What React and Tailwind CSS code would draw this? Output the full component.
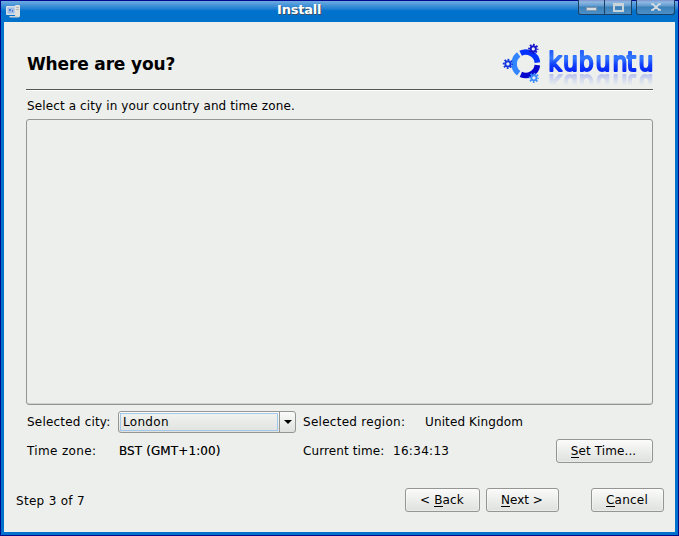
import React from "react";

function Btn({ hot, before = "", after, className }) {
  return (
    <button
      className={`h-6 rounded-[3px] border border-[#949694] bg-linear-to-b from-[#fafbfa] to-[#dfe1de] text-center leading-[22px] whitespace-pre shadow-[inset_0_0_0_1px_rgba(255,255,255,0.35)] ${className}`}
    >
      {before}
      <span className="inline-block h-[13px] border-b border-black leading-[13px]">{hot}</span>
      {after}
    </button>
  );
}

function WinBtn({ children, className }) {
  return (
    <div
      className={`flex h-[15px] items-center justify-center border-r border-b border-l border-[#1c3f66] bg-[linear-gradient(180deg,#7d90cc_0px,#8fb9e2_2px,#5f9bd0_6px,#3c80b8_7px,#4a90c8_14px)] ${className}`}
    >
      {children}
    </div>
  );
}

function Gear({ x, y, color }) {
  return (
    <g transform={`translate(${x} ${y})`} stroke={color} fill="none">
      <circle r="2.6" strokeWidth="1.9" />
      <circle r="4.2" strokeWidth="1.9" strokeDasharray="1.7 1.6" strokeDashoffset="0.8" />
    </g>
  );
}

function Logo() {
  return (
    <div className="flex h-[44px] items-start">
      <svg width="45" height="44" viewBox="500 42 45 44" className="block">
        <g fill="none" strokeWidth="5.6">
          <path d="M520.6 53.3 A11.7 11.7 0 0 1 537.4 62.6" stroke="#0433ff" />
          <path d="M537.4 65.2 A11.7 11.7 0 0 1 520.9 74.4" stroke="#0505cc" />
          <path d="M518.7 73.2 A11.7 11.7 0 0 1 518.7 54.6" stroke="#3385ff" />
        </g>
        <Gear x={533.3} y={48.9} color="#1515cc" />
        <Gear x={507.9} y={63.9} color="#1438e0" />
        <Gear x={533.9} y={77.8} color="#3e8cff" />
      </svg>
      <svg
        width="109"
        height="31"
        viewBox="0 0 109 31"
        className="block [-webkit-box-reflect:below_0px_linear-gradient(180deg,transparent_60%,rgba(0,0,0,0.25)_100%)]"
      >
        <defs>
          <linearGradient id="word" x1="0" y1="7" x2="0" y2="30" gradientUnits="userSpaceOnUse">
            <stop offset="0" stopColor="#1f55ff" />
            <stop offset="0.4" stopColor="#3478ff" />
            <stop offset="0.7" stopColor="#0f3cfc" />
            <stop offset="1" stopColor="#0524f5" />
          </linearGradient>
        </defs>
        <text
          transform="scale(0.88 1)"
          x="3.6 20.4 38.4 57.4 76.6 92.8 106.3"
          y="28.6"
          fontFamily="DejaVu Sans, sans-serif"
          fontSize="26.8"
          fill="url(#word)"
          stroke="url(#word)"
          strokeWidth="2.1"
          strokeLinejoin="round"
        >
          kubuntu
        </text>
      </svg>
    </div>
  );
}

function AppIcon() {
  return (
    <svg width="15" height="14" viewBox="0 0 15 14" className="block">
      <rect x="9" y="0" width="5" height="12" rx="1" fill="#dfe0dc" />
      <path d="M10 2.5h3M10 4.5h3" stroke="#b4b8b8" />
      <rect x="0" y="1" width="10" height="9" rx="1" fill="#d9dee3" />
      <rect x="1.5" y="2.5" width="7" height="6" fill="#9dbce8" />
      <path d="M3 4h2v2H3zM6 5h1v2H6z" fill="#4f7fd0" />
      <path d="M3 11h9l1 1.5H4z" fill="#cfd2d0" />
    </svg>
  );
}

export default function App() {
  return (
    <div className="flex h-[536px] w-[679px] flex-col border border-[#000a8c] bg-[#0072cc] px-[3px] pb-[3px] font-['DejaVu_Sans',sans-serif] text-[12px] text-black">
      <header className="-mx-[3px] flex h-[21px] shrink-0 items-start bg-[linear-gradient(180deg,#6fabe3_0px,#4795d8_4px,#1d7fd0_8px,#0072cc_10px)]">
        <div className="w-[90px] pt-[4px] pl-[5px]">
          <AppIcon />
        </div>
        <div className="flex-1 pl-[186px] text-[13px] leading-[18px] font-bold tracking-[-0.2px] text-white [text-shadow:1px_1px_0_#3d4f60]">
          Install
        </div>
        <div className="-mt-px flex pr-[3px]">
          <WinBtn className="w-[27px] rounded-bl-[3px]">
            <i className="mt-[4px] h-[4px] w-[11px] border border-[#7f98ad] bg-[#d5dde2]" />
          </WinBtn>
          <WinBtn className="w-[27px] border-l-0">
            <i className="h-[9px] w-[11px] border-2 border-t-[3px] border-[#c8d3da]" />
          </WinBtn>
          <WinBtn className="ml-[4px] w-[39px] rounded-b-[3px]">
            <svg width="10" height="8" viewBox="0 0 10 8">
              <path d="M1.5 1l3.5 3 3.5-3M1.5 7l3.5-3 3.5 3M0 1h3M7 1h3M0 7h3M7 7h3" stroke="#d5dde2" strokeWidth="1.7" fill="none" />
            </svg>
          </WinBtn>
        </div>
      </header>

      <main className="flex flex-1 flex-col bg-[#edefec]">
        <div className="ml-[22px] flex h-[68px] w-[627px] justify-between border-b border-[#555755] shadow-[0_1px_0_#fff]">
          <h1 className="pt-[31px] pl-px text-[17px] leading-[22px] font-bold tracking-[-0.15px]">Where are you?</h1>
          <div className="-mr-px pt-[20px]">
            <Logo />
          </div>
        </div>
        <p className="mt-[8px] ml-[23px] h-[21px] leading-[16px] tracking-[0.12px]">Select a city in your country and time zone.</p>
        <div className="ml-[22px] h-[286px] w-[627px] rounded-[3px] border border-[#949694] shadow-[inset_0_-1px_0_#cfd1ce]" />

        <div className="mt-[6px] ml-[23px] flex h-[22px] w-[626px] items-center">
          <span className="w-[91px] tracking-[0.2px]">Selected city:</span>
          <div className="flex h-[22px] w-[178px] rounded-[3px] border border-[#949694] bg-linear-to-b from-[#fafbfa] to-[#dfe1de]">
            <div className="flex-1 p-px">
              <div className="h-[18px] border border-[#a3c8ea] bg-linear-to-b from-[#f0f2ef] to-[#e2e4e1] pl-[2px] leading-[17px] tracking-[0.3px]">
                London
              </div>
            </div>
            <div className="flex w-[16px] items-center justify-center border-l border-[#949694]">
              <svg width="8" height="4" viewBox="0 0 8 4">
                <path d="M0 0h8L4 4z" />
              </svg>
            </div>
          </div>
          <span className="ml-[7px] w-[122px] tracking-[0.28px]">Selected region:</span>
          <span className="tracking-[0.12px]">United Kingdom</span>
        </div>

        <div className="mt-[6px] ml-[23px] flex h-[24px] w-[626px] items-center">
          <span className="w-[92px] tracking-[0.35px]">Time zone:</span>
          <span className="w-[184px] tracking-[0.1px] [text-shadow:0_0_0_rgba(0,0,0,0.5)]">BST (GMT+1:00)</span>
          <span className="w-[90px] tracking-[0.1px]">Current time:</span>
          <span className="tracking-[0.3px]">16:34:13</span>
          <Btn hot="S" after="et Time..." className="ml-auto w-[97px] pr-[2px] tracking-[0.1px]" />
        </div>

        <footer className="mt-[25px] ml-[12px] flex h-[24px] w-[648px] items-center">
          <span className="pt-px tracking-[0.3px]">Step 3 of 7</span>
          <Btn before="< " hot="B" after="ack" className="ml-auto w-[75px] pr-px tracking-[0.15px]" />
          <Btn hot="N" after="ext >" className="ml-[6px] w-[73px] pr-px" />
          <Btn hot="C" after="ancel" className="ml-[32px] w-[73px] pr-px tracking-[0.25px]" />
        </footer>
      </main>
    </div>
  );
}
